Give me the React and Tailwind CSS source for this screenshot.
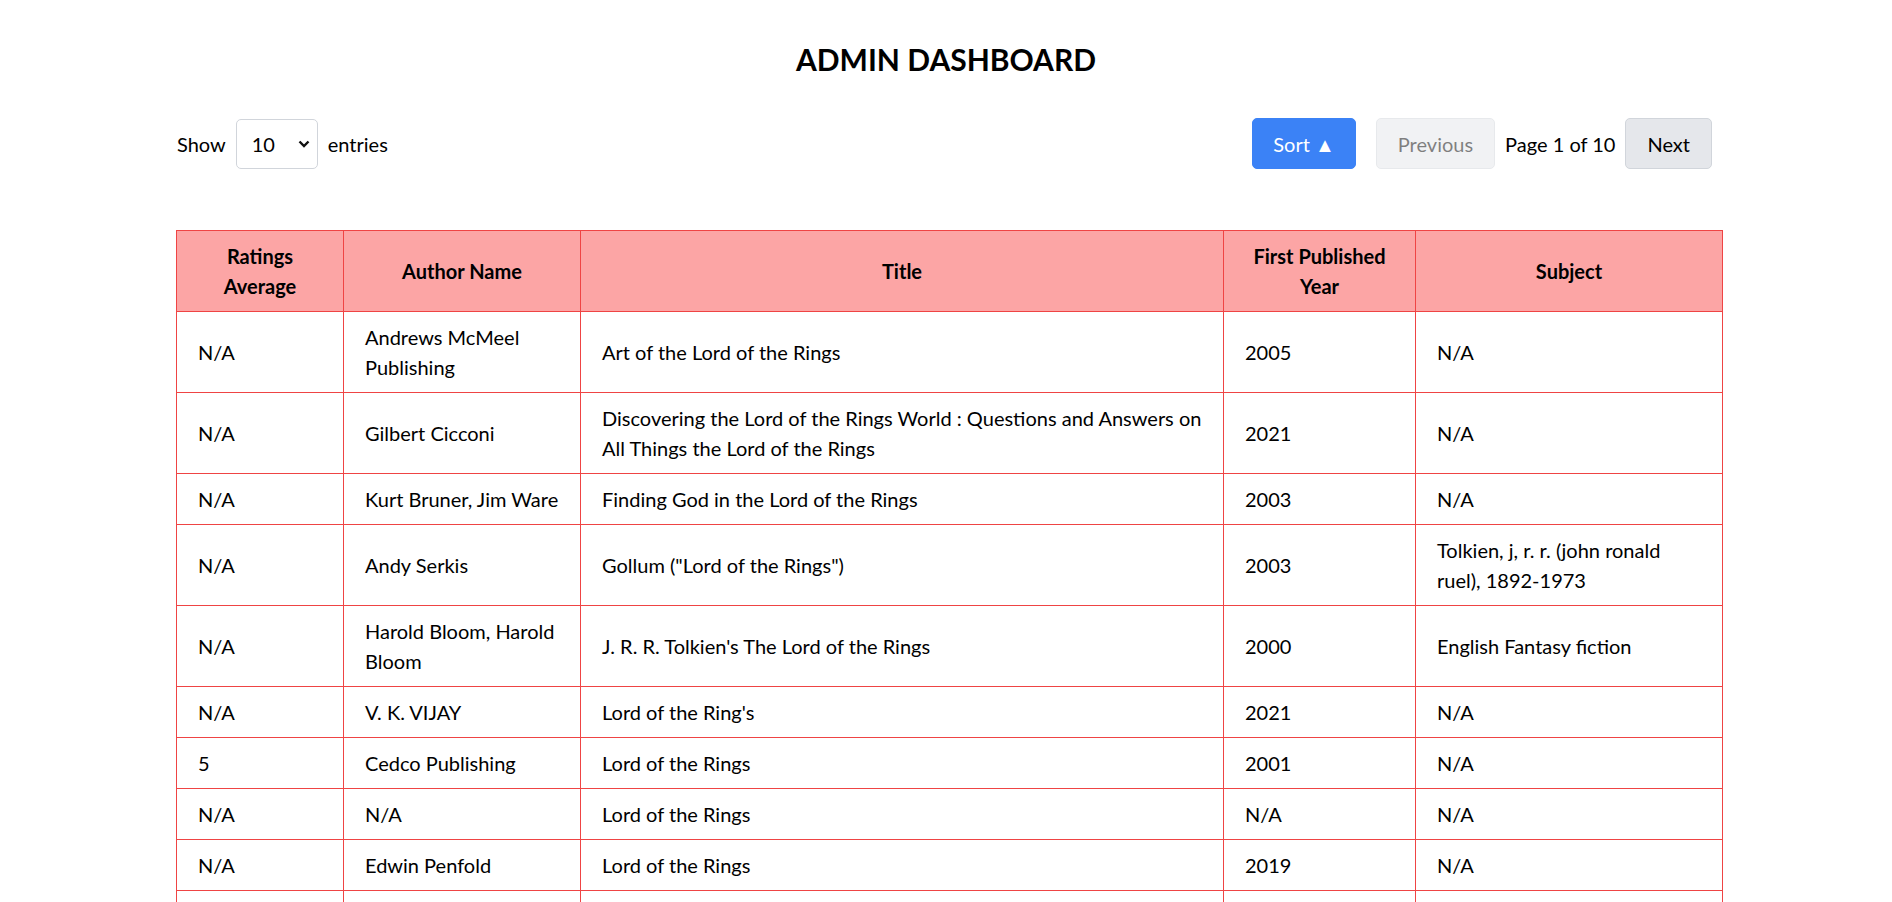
import { useState } from 'react';

const books = [
  { rating: 'N/A', author: 'Andrews McMeel Publishing', title: 'Art of the Lord of the Rings', year: '2005', subject: 'N/A' },
  { rating: 'N/A', author: 'Gilbert Cicconi', title: 'Discovering the Lord of the Rings World : Questions and Answers on All Things the Lord of the Rings', year: '2021', subject: 'N/A' },
  { rating: 'N/A', author: 'Kurt Bruner, Jim Ware', title: 'Finding God in the Lord of the Rings', year: '2003', subject: 'N/A' },
  { rating: 'N/A', author: 'Andy Serkis', title: 'Gollum ("Lord of the Rings")', year: '2003', subject: 'Tolkien, j, r. r. (john ronald ruel), 1892-1973' },
  { rating: 'N/A', author: 'Harold Bloom, Harold Bloom', title: "J. R. R. Tolkien's The Lord of the Rings", year: '2000', subject: 'English Fantasy fiction' },
  { rating: 'N/A', author: 'V. K. VIJAY', title: "Lord of the Ring's", year: '2021', subject: 'N/A' },
  { rating: '5', author: 'Cedco Publishing', title: 'Lord of the Rings', year: '2001', subject: 'N/A' },
  { rating: 'N/A', author: 'N/A', title: 'Lord of the Rings', year: 'N/A', subject: 'N/A' },
  { rating: 'N/A', author: 'Edwin Penfold', title: 'Lord of the Rings', year: '2019', subject: 'N/A' },
  { rating: 'N/A', author: 'J. R. R. Tolkien', title: 'Lord of the Rings', year: '1991', subject: 'N/A' },
];

export default function App() {
  const [perPage, setPerPage] = useState('10');

  return (
    <div className="min-h-screen bg-white text-black font-['Segoe_UI',Lato,sans-serif]">
      <h1 className="pt-[39px] text-center text-[30px] leading-[40px] font-bold">ADMIN DASHBOARD</h1>

      <div className="ml-[176px] w-[1546px]">
        {/* controls */}
        <div className="mt-[39px] flex items-center justify-between pl-px pr-[10px] text-[20px] leading-[30px]">
          <div className="flex items-center gap-[10px]">
            <span>Show</span>
            <div className="relative">
              <select
                value={perPage}
                onChange={(e) => setPerPage(e.target.value)}
                className="h-[50px] w-[82px] appearance-none rounded-[5px] border border-[#d1d5db] bg-white pl-[15px] text-[20px] outline-none"
              >
                <option value="10">10</option>
                <option value="25">25</option>
                <option value="50">50</option>
              </select>
              <svg className="pointer-events-none absolute right-[8px] top-[21px]" width="12" height="8" viewBox="0 0 12 8">
                <path d="M1.5 1.5 L6 6 L10.5 1.5" fill="none" stroke="#111" strokeWidth="2.4" />
              </svg>
            </div>
            <span>entries</span>
          </div>

          <div className="flex items-center gap-[10px]">
            <button className="mr-[10px] h-[51px] rounded-[5px] border border-[#3b82f6] bg-[#3b82f6] px-[20px] text-white">
              Sort ▲
            </button>
            <button disabled className="h-[51px] rounded-[5px] border border-[#d1d5db] bg-[#e5e7eb] px-[21px] opacity-50">
              Previous
            </button>
            <span>Page 1 of 10</span>
            <button className="h-[51px] rounded-[5px] border border-[#d1d5db] bg-[#e5e7eb] px-[21px]">
              Next
            </button>
          </div>
        </div>

        {/* table */}
        <table className="mt-[61px] w-full table-fixed border-collapse text-[20px] leading-[30px]">
          <colgroup>
            <col className="w-[167px]" />
            <col className="w-[237px]" />
            <col className="w-[643px]" />
            <col className="w-[192px]" />
            <col className="w-[307px]" />
          </colgroup>
          <thead>
            <tr className="bg-[#fca5a5]">
              <th className="border border-[#ef4444] px-[20px] py-[10px] text-center font-bold">Ratings Average</th>
              <th className="border border-[#ef4444] px-[20px] py-[10px] text-center font-bold">Author Name</th>
              <th className="border border-[#ef4444] px-[20px] py-[10px] text-center font-bold">Title</th>
              <th className="border border-[#ef4444] px-[20px] py-[10px] text-center font-bold">First Published Year</th>
              <th className="border border-[#ef4444] px-[20px] py-[10px] text-center font-bold">Subject</th>
            </tr>
          </thead>
          <tbody>
            {books.map((b, i) => (
              <tr key={i}>
                <td className="border border-[#ef4444] px-[21px] py-[10px]">{b.rating}</td>
                <td className="border border-[#ef4444] px-[21px] py-[10px]">{b.author}</td>
                <td className="border border-[#ef4444] px-[21px] py-[10px]">{b.title}</td>
                <td className="border border-[#ef4444] px-[21px] py-[10px]">{b.year}</td>
                <td className="border border-[#ef4444] px-[21px] py-[10px]">{b.subject}</td>
              </tr>
            ))}
          </tbody>
        </table>
      </div>
    </div>
  );
}
